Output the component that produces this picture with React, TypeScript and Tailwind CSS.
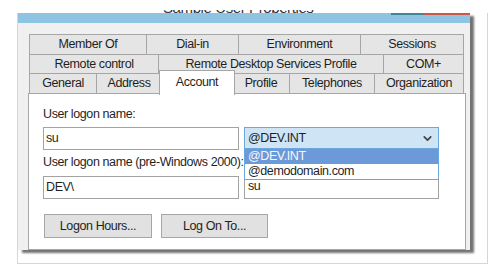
import { ChevronDown } from 'lucide-react'

type Tab = { label: string; w: string; active?: boolean }

const rows: Tab[][] = [
  [
    { label: 'Member Of', w: 'w-[118px]' },
    { label: 'Dial-in', w: 'w-[93px]' },
    { label: 'Environment', w: 'w-[123px]' },
    { label: 'Sessions', w: 'w-[104px]' },
  ],
  [
    { label: 'Remote control', w: 'w-[130px]' },
    { label: 'Remote Desktop Services Profile', w: 'w-[226px]' },
    { label: 'COM+', w: 'w-[81px]' },
  ],
  [
    { label: 'General', w: 'w-[68px]' },
    { label: 'Address', w: 'w-[66px]' },
    { label: 'Account', w: 'w-[76px]', active: true },
    { label: 'Profile', w: 'w-[58px]' },
    { label: 'Telephones', w: 'w-[86px]' },
    { label: 'Organization', w: 'w-[90px]' },
  ],
]

function TabRow({ tabs, h, first }: { tabs: Tab[]; h: string; first?: boolean }) {
  return (
    <div className={`ml-px flex items-start ${h} ${first ? '' : '-mt-px'}`}>
      {tabs.map((t, i) => {
        const prevActive = i > 0 && tabs[i - 1].active
        if (t.active) {
          return (
            <div
              key={t.label}
              className={`relative z-10 -mt-[3px] -ml-[3px] flex h-[25px] ${t.w} items-center justify-center border border-b-0 border-[#a6a6a6] bg-white pb-[2px]`}
            >
              {t.label}
            </div>
          )
        }
        return (
          <div
            key={t.label}
            className={`flex ${h} ${t.w} items-center justify-center border border-[#a6a6a6] bg-[#e5e5e5] ${
              i === 0 ? '' : prevActive ? '-ml-[3px]' : '-ml-px'
            }`}
          >
            {t.label}
          </div>
        )
      })}
    </div>
  )
}

export default function App() {
  return (
    <div className="h-[276px] w-[500px] overflow-hidden bg-white font-['Liberation_Sans',Arial,sans-serif] text-[12.5px] tracking-[-0.4px] text-[#1f1f1f]">
      {/* title, cut off at the top of the screenshot */}
      <div className="ml-[163px] mt-[10px] h-[3px] w-[170px] overflow-hidden">
        <div className="-mt-[8px] whitespace-nowrap text-[15px] leading-[12px] text-[#2b3440]">
          Sample User Properties
        </div>
      </div>

      <div className="ml-[17px] h-[251px] w-[471px] border-x border-b border-[#c3daf0]">
        <div className="h-[237px] w-[452px] bg-[#f0f0f0] shadow-[4px_3px_2px_rgba(0,0,0,0.55)]">
          <div className="flex h-[10px] justify-end bg-[#8fc3e2]">
            <div className="h-[2px] w-[33px] bg-[#3f8797]" />
            <div className="h-[2px] w-[46px] bg-[#c9584b]" />
          </div>

          <div className="pl-[10px] pt-[11px]">
            <TabRow tabs={rows[0]} h="h-[21px]" first />
            <TabRow tabs={rows[1]} h="h-[20px]" />
            <TabRow tabs={rows[2]} h="h-[21px]" />

            <div className="relative -mt-px h-[157px] w-[438px] border border-[#a6a6a6] bg-white pl-[14px] pt-[13px]">
              <div className="leading-[15px]">User logon name:</div>
              <div className="mt-[5px] flex gap-[5px]">
                <div className="flex h-[23px] w-[196px] items-center border border-[#a3a3a3] pl-[2px]">su</div>
                <div className="relative w-[195px]">
                  <div className="flex h-[23px] items-center justify-between border border-[#6fa6dc] bg-[#cfe4f5] pl-[3px] pr-[4px]">
                    <span>@DEV.INT</span>
                    <ChevronDown size={13} strokeWidth={3} className="text-[#404040]" />
                  </div>
                  <div className="absolute left-0 top-[21px] z-20 w-full border border-[#6aa7e0] bg-white">
                    <div className="h-[15px] bg-[#6c99d8] pl-[3px] leading-[15px] text-[#f4f8fc]">@DEV.INT</div>
                    <div className="h-[15px] pl-[3px] leading-[15px]">@demodomain.com</div>
                  </div>
                </div>
              </div>

              <div className="mt-[5px] whitespace-nowrap leading-[15px]">User logon name (pre-Windows 2000):</div>
              <div className="mt-[6px] flex gap-[5px]">
                <div className="flex h-[23px] w-[196px] items-center border border-[#a3a3a3] pl-[2px]">DEV\</div>
                <div className="flex h-[23px] w-[195px] items-end border border-[#a3a3a3] pb-[2px] pl-[3px]">su</div>
              </div>

              <div className="ml-px mt-[15px] flex gap-[9px]">
                <button className="h-[24px] w-[108px] border border-[#a6a6a6] bg-[#e1e1e1]">Logon Hours...</button>
                <button className="h-[24px] w-[107px] border border-[#a6a6a6] bg-[#e1e1e1]">Log On To...</button>
              </div>
            </div>
          </div>
        </div>
      </div>
    </div>
  )
}
